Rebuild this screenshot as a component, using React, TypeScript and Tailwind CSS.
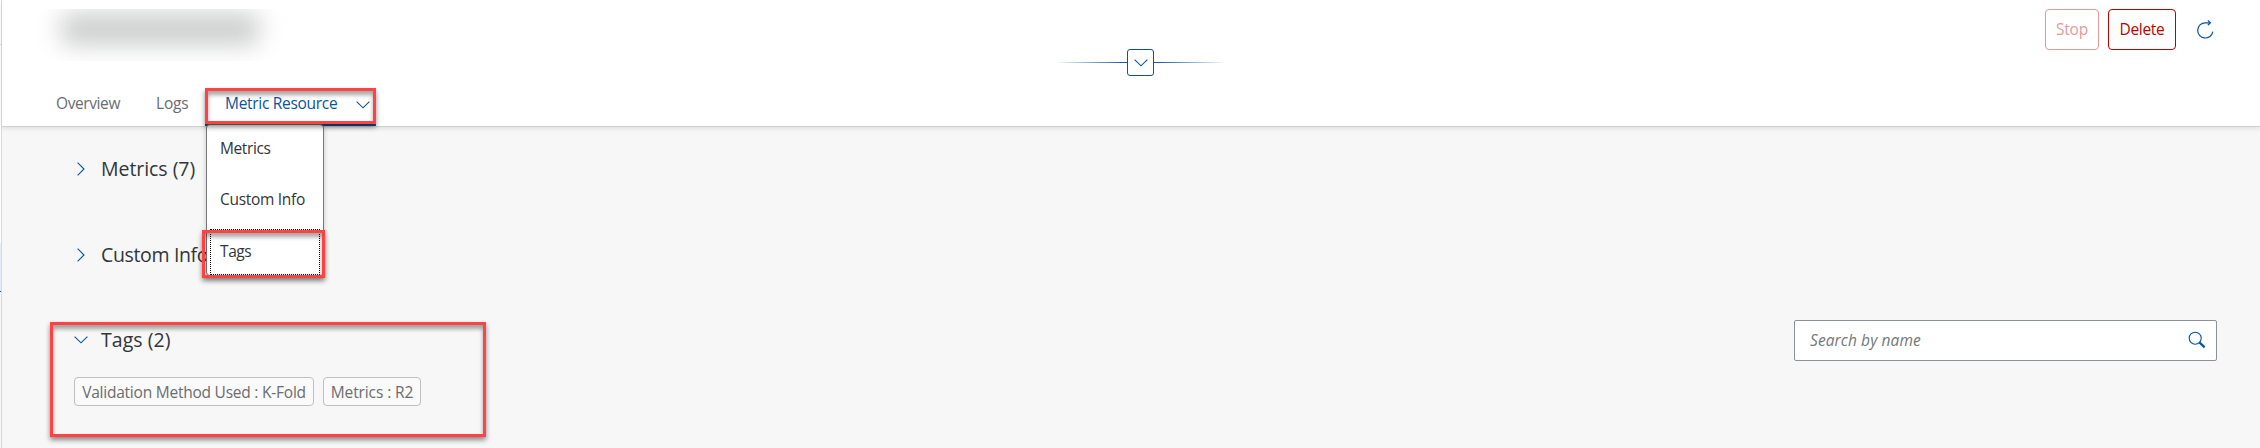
import type { ReactNode } from 'react';

function ChevronDown({ className = '' }: { className?: string }) {
  return (
    <svg className={className} width="14" height="8" viewBox="0 0 14 8" fill="none" stroke="currentColor" strokeWidth="1.1">
      <path d="M0.6 0.6 L7 6.8 L13.4 0.6" />
    </svg>
  );
}

function ChevronRight() {
  return (
    <svg width="8" height="14" viewBox="0 0 8 14" fill="none" stroke="currentColor" strokeWidth="1.1">
      <path d="M0.6 0.6 L7 7 L0.6 13.4" />
    </svg>
  );
}

function Highlight({ className }: { className: string }) {
  return (
    <div
      className={`pointer-events-none absolute border-[3px] border-[#ff4343] shadow-[inset_0_4px_4px_rgba(0,0,0,0.35),0_3px_5px_rgba(0,0,0,0.45)] ${className}`}
    />
  );
}

function Section({ icon, title, tracking }: { icon: ReactNode; title: string; tracking: string }) {
  return (
    <div className="flex h-[42px] items-center">
      <span className="flex w-[27px] items-center text-[#0854a0]">{icon}</span>
      <h2 className={`whitespace-nowrap text-[19.5px] leading-7 text-[#32363a] ${tracking}`}>{title}</h2>
    </div>
  );
}

function Tag({ children, className }: { children: ReactNode; className: string }) {
  return (
    <span className={`flex h-[29px] items-center justify-center whitespace-nowrap rounded-[4px] border border-[#bfbfbf] bg-[#fafafa] text-[#6a6d70] ${className}`}>
      {children}
    </span>
  );
}

export default function App() {
  return (
    <div className="relative flex h-[448px] w-[2260px] overflow-hidden bg-[#f7f7f7] font-['Open_Sans','Noto_Sans',sans-serif] text-[15.5px] leading-5 tracking-[-0.4px]">
      <div className="flex w-[2px] shrink-0 flex-col border-r border-[#d9d9d9] bg-white">
        <div className="h-[45px] border-b border-[#d9d9d9]" />
        <div className="h-[198px]" />
        <div className="h-[49px] border-b border-[#0854a0] bg-[#e3eefa]" />
        <div className="grow bg-[#f7f7f7]" />
      </div>

      <div className="flex min-w-0 grow flex-col">
        <header className="flex h-[127px] shrink-0 flex-col border-b border-[#d0d0d0] bg-white shadow-[0_2px_4px_rgba(0,0,0,0.09)]">
          <div className="flex h-[49px] items-start justify-between pt-[9px]">
            <div className="ml-[35px] h-[52px] w-[254px] overflow-hidden">
              <div className="ml-[24px] mt-[4px] h-[32px] w-[198px] rounded-lg bg-[#cccdcd] blur-[12px]" />
            </div>
            <div className="mr-[44px] flex items-center">
              <button className="h-[41px] w-[54px] rounded-[4px] border border-[#e69999] pb-0.5 tracking-[-0.15px] text-[#e69999]">Stop</button>
              <button className="ml-[9px] h-[41px] w-[68px] rounded-[4px] border border-[#bb0000] pb-0.5 tracking-[-0.3px] text-[#bb0000]">Delete</button>
              <svg className="ml-[20px]" width="20" height="20" viewBox="0 0 20 20" fill="none" stroke="#0854a0" strokeWidth="1.2">
                <path d="M16.8 11.6A7.6 7.6 0 1 1 9.2 2.8H14.2" />
                <path d="M11.8 0.4L14.4 2.8L11.8 5.2" />
              </svg>
            </div>
          </div>
          <div className="ml-[1053px] flex h-[27px] w-[171px] items-center">
            <div className="h-px grow bg-gradient-to-r from-transparent to-[#0854a0]" />
            <div className="flex size-[27px] items-center justify-center rounded-[3px] border border-[#0854a0] text-[#0854a0]">
              <ChevronDown />
            </div>
            <div className="h-px grow bg-gradient-to-l from-transparent to-[#0854a0]" />
          </div>
          <nav className="flex h-[50px] pt-[17px] text-[#6a6d70]">
            <span className="ml-[54px] w-[100px]">Overview</span>
            <span className="w-[49px] tracking-[-0.2px]">Logs</span>
            <span className="flex h-[33px] w-[171px] border-b-2 border-[#0854a0] pl-[20px] text-[#0854a0]">
              <span className="w-[131px] whitespace-nowrap tracking-[-0.3px]">Metric Resource</span>
              <ChevronDown className="mt-[8px]" />
            </span>
          </nav>
        </header>

        <main className="flex flex-col pl-[72px] pr-[43px] pt-[21px]">
          <Section icon={<span className="ml-[3px]"><ChevronRight /></span>} title="Metrics (7)" tracking="tracking-[-0.05px]" />
          <div className="mt-[44px]">
            <Section icon={<span className="ml-[3px]"><ChevronRight /></span>} title="Custom Info" tracking="tracking-[-0.35px]" />
          </div>
          <div className="mt-[43px] flex h-[42px] items-center justify-between">
            <Section icon={<ChevronDown />} title="Tags (2)" tracking="tracking-[0.05px]" />
            <div className="flex h-[41px] w-[423px] items-center justify-between rounded-[2px] border border-[#89919a] bg-white pl-[15px] pr-[10px]">
              <span className="italic tracking-[0.1px] text-[#74777a]">Search by name</span>
              <svg width="18" height="18" viewBox="0 0 18 18" fill="none" stroke="#0854a0">
                <circle cx="7.2" cy="7.2" r="6" strokeWidth="1.1" />
                <path d="M11.4 11.4L16.6 16.4" strokeWidth="2.2" />
              </svg>
            </div>
          </div>
          <div className="mt-[16px] flex gap-[9px]">
            <Tag className="w-[240px] tracking-[-0.23px]">Validation Method Used : K-Fold</Tag>
            <Tag className="w-[98px] tracking-[-0.1px]">Metrics : R2</Tag>
          </div>
        </main>
      </div>

      <div className="absolute left-[206px] top-[124px] flex h-[152px] w-[118px] flex-col rounded-[4px] border border-[#77797b] bg-white text-[#32363a] shadow-[0_2px_5px_rgba(0,0,0,0.2)]">
        <div className="flex h-[51px] items-center pb-[5px] pl-[13px]">Metrics</div>
        <div className="flex h-[51px] items-center pb-[5px] pl-[13px] tracking-[-0.3px]">Custom Info</div>
        <div className="ml-[3px] mt-[2px] flex h-[46px] w-[110px] items-center border border-dotted border-black pb-[3px] pl-[9px]">Tags</div>
      </div>

      <Highlight className="left-[205px] top-[88px] h-[36px] w-[171px]" />
      <Highlight className="left-[202px] top-[230px] h-[48px] w-[123px]" />
      <Highlight className="left-[50px] top-[322px] h-[115px] w-[436px]" />
    </div>
  );
}
